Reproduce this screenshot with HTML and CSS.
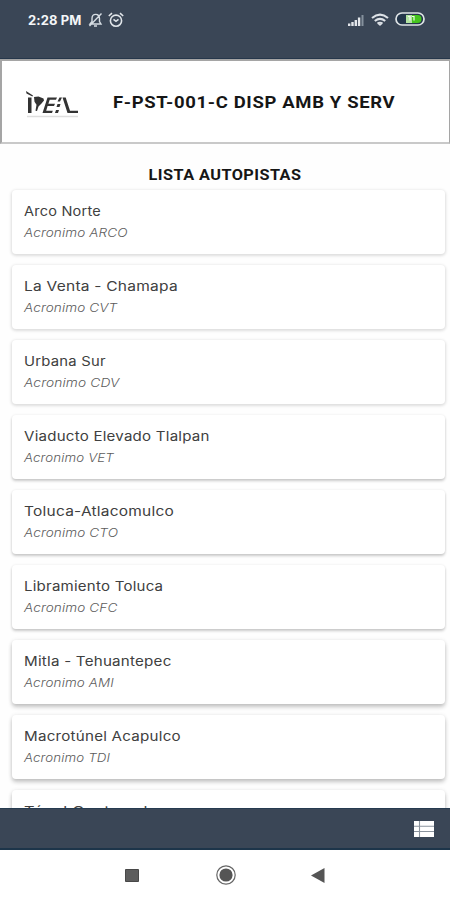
FILE: index.html
```html
<!DOCTYPE html>
<html lang="es">
<head>
<meta charset="utf-8">
<title>Lista Autopistas</title>
<link rel="stylesheet" href="styles.css">
</head>
<body>
<div class="screen">
  <div class="status">
    <span class="time">2:28 PM</span>
    <svg class="bell" width="15" height="16" viewBox="0 0 15 16" fill="none" stroke="#d5dce2" stroke-width="1.4"><path d="M2 12H13L11.5 9.5V6.5C11.5 1 4 1 4 6.5V9.5ZM6 14H9M13.5 1.5L1.5 14"/></svg>
    <svg class="alarm" width="16" height="16" viewBox="0 0 16 16" fill="none" stroke="#e0e5e9" stroke-width="1.6"><circle cx="8" cy="8.7" r="5.6"/><path d="M.8 4L4 1.2M15.2 4L12 1.2M5.5 7.3L8 9.3L10.5 7.3"/></svg>
    <svg class="signal" width="18" height="13" viewBox="0 0 18 13" fill="#e4e7eb"><path d="M1 9.5h2.4V12H1zM4.3 8h2.4v4H4.3zM7.6 6h2.4v6H7.6zM10.9 3.5h2.4V12h-2.4z"/><path d="M14.5 1h2v11h-2z" fill="#84909c"/></svg>
    <svg class="wifi" width="18" height="14" viewBox="0 0 18 14" fill="none" stroke="#dde2e7" stroke-width="2.1"><path d="M1 5Q9-1.6 17 5M3.8 8Q9 3.7 14.2 8M6.5 10.6Q9 8.8 11.5 10.6"/><path d="M7 11h4l-2 2z" fill="#dde2e7" stroke="none"/></svg>
    <svg class="battery" width="30" height="14" viewBox="0 0 30 14"><rect x="1" y="1" width="28" height="12" rx="6" fill="#24364a" stroke="#dfe4e6" stroke-width="1.7"/><path d="M11 3h11.5a4 4 0 010 8H11z" fill="#45c51d"/><path d="M11 3h6v8h-6z" fill="#b2e3a1"/><path d="M13 4.5h2v4M17 4.5h2v4" stroke="#effbe9" fill="none" stroke-width="1.2"/></svg>
  </div>
  <header class="header">
    <svg class="logo" width="54" height="30" viewBox="0 0 54 30" fill="#333"><path d="M1 1L8 5.5L7.4 6.6L1.5 3.5ZM3 7.5h3.5v15.5H3zM9 7l4.5-.5 5 2 .5 2-2.5 3-3 3-1.5 4.5-1.5-.3 1-6-2-3zM22.5 7.5h9.5l-1 2.3h-6.3l-1.3 4H30l-1 2.3h-6.4l-1.4 4.6h6.6L27 23h-9.5zM34.5 7.5h2.5l-2 4h-2.5zM32.5 14h3l-1 3h-3zM31 20h3l-1 3h-3zM37.5 7.5h3.2L45 20.7h8V23H42.5z"/><path d="M2 26.5H53" stroke="#dedede" stroke-width="1.5"/></svg>
    <h1 class="title">F-PST-001-C DISP AMB Y SERV</h1>
  </header>
  <main class="content">
    <h2 class="subtitle">LISTA AUTOPISTAS</h2>
    <div class="list">
      <div class="card"><p class="name n1">Arco Norte</p><p class="code c1">Acronimo ARCO</p></div>
      <div class="card"><p class="name n2">La Venta - Chamapa</p><p class="code c2">Acronimo CVT</p></div>
      <div class="card"><p class="name n3">Urbana Sur</p><p class="code c3">Acronimo CDV</p></div>
      <div class="card mid"><p class="name n4">Viaducto Elevado Tlalpan</p><p class="code c4">Acronimo VET</p></div>
      <div class="card mid"><p class="name n5">Toluca-Atlacomulco</p><p class="code c5">Acronimo CTO</p></div>
      <div class="card mid"><p class="name n6">Libramiento Toluca</p><p class="code c6">Acronimo CFC</p></div>
      <div class="card low"><p class="name n7">Mitla - Tehuantepec</p><p class="code c7">Acronimo AMI</p></div>
      <div class="card low"><p class="name n8">Macrotúnel Acapulco</p><p class="code c8">Acronimo TDI</p></div>
      <div class="card low"><p class="name n9">Túnel Guatemala</p></div>
    </div>
  </main>
  <div class="toolbar">
    <svg width="22" height="18" viewBox="0 0 22 18"><path fill="#fff" d="M1 1h20v16H1z"/><path d="M6.5 1v16M1 6.2h20M1 11.5h20" stroke="#8b949e" stroke-width="1.1"/></svg>
  </div>
  <nav class="nav">
    <svg width="14" height="13" viewBox="0 0 14 13"><path fill="#5d5d5d" stroke="#484848" d="M.5.5h13v12H.5z"/></svg>
    <svg width="20" height="20" viewBox="0 0 20 20"><circle cx="10" cy="10" r="9.2" fill="#fff" stroke="#666" stroke-width="1.2"/><circle cx="10" cy="10" r="6.6" fill="#555"/></svg>
    <svg width="14" height="15" viewBox="0 0 14 15"><path fill="#555" d="M0 7.5L13.5 0v15z"/></svg>
  </nav>
</div>
</body>
</html>
```
FILE: styles.css
```css
* { box-sizing: border-box; margin: 0; padding: 0; }
body { background: #fff; font-family: Inter, sans-serif; }
svg { display: block; flex: none; }
.screen { width: 450px; height: 900px; display: flex; flex-direction: column; overflow: hidden; }
.status { height: 59px; flex: none; background: #3a4656; display: flex; align-items: flex-start; padding: 12px 25px 0 28px; border-bottom: 1px solid #26374b; }
.time { width: 60px; font: 700 13px/16px Inter, sans-serif; letter-spacing: .1px; color: #f4f6f8; white-space: nowrap; }
.alarm { margin-left: 5px; }
.signal { margin: 2px 0 0 auto; }
.wifi { margin: 1px 0 0 6px; }
.battery { margin: 0 0 0 6px; }
.header { height: 85px; flex: none; display: flex; align-items: center; border: 2px solid #a5a5a5; border-right-width: 1px; border-bottom-color: #c9c9c9; padding-left: 23px; }
.logo { margin-top: 6px; }
.title { margin: 0 0 0 34px; font: 700 17px/22px Roboto, sans-serif; letter-spacing: .6px; color: #161616; white-space: nowrap; transform: scaleX(1.087); transform-origin: left; }
.content { height: 664px; flex: none; overflow: hidden; background: #fefefe; }
.subtitle { height: 46px; padding-top: 21px; text-align: center; font: 700 15px/20px Roboto, sans-serif; letter-spacing: .4px; color: #161616; transform: scaleX(1.085); }
.list { display: flex; flex-direction: column; gap: 11px; padding: 0 5px 0 12px; }
.card { height: 64px; flex: none; padding: 12px; border-radius: 4px; background: #fff; box-shadow: 0 1px 3px 1px rgba(0,0,0,.13); }
.card.mid { box-shadow: 0 2px 3px 0 rgba(0,0,0,.2), 0 0 3px rgba(0,0,0,.07); }
.card.low { box-shadow: 0 3px 4px 0 rgba(0,0,0,.22), 0 0 4px rgba(0,0,0,.08); }
.name { height: 22px; font-size: 13px; line-height: 18px; letter-spacing: .2px; color: #404040; white-space: nowrap; transform-origin: left; }
.code { font-size: 12px; line-height: 18px; letter-spacing: .1px; font-style: italic; font-weight: 300; color: #5c5c5c; white-space: nowrap; transform-origin: left; }
.n1 { transform: scaleX(1.116); }
.n2 { transform: scaleX(1.193); }
.n3 { transform: scaleX(1.14); }
.n4 { transform: scaleX(1.159); }
.n5 { transform: scaleX(1.19); }
.n6 { transform: scaleX(1.156); }
.n7 { transform: scaleX(1.165); }
.n8 { transform: scaleX(1.166); }
.n9 { transform: scaleX(1.26); }
.c1, .c2, .c5, .c6 { transform: scaleX(1.132); }
.c3 { transform: scaleX(1.148); }
.c4, .c8 { transform: scaleX(1.112); }
.c7 { transform: scaleX(1.122); }
.toolbar { height: 42px; flex: none; background: #3a4656; border-top: 1px solid #263b50; border-bottom: 2px solid #1d354a; display: flex; justify-content: flex-end; align-items: center; padding-right: 15px; }
.nav { height: 50px; flex: none; display: flex; align-items: center; padding-left: 125px; }
.nav svg:nth-child(2) { margin-left: 77px; }
.nav svg:nth-child(3) { margin-left: 75px; }
```
